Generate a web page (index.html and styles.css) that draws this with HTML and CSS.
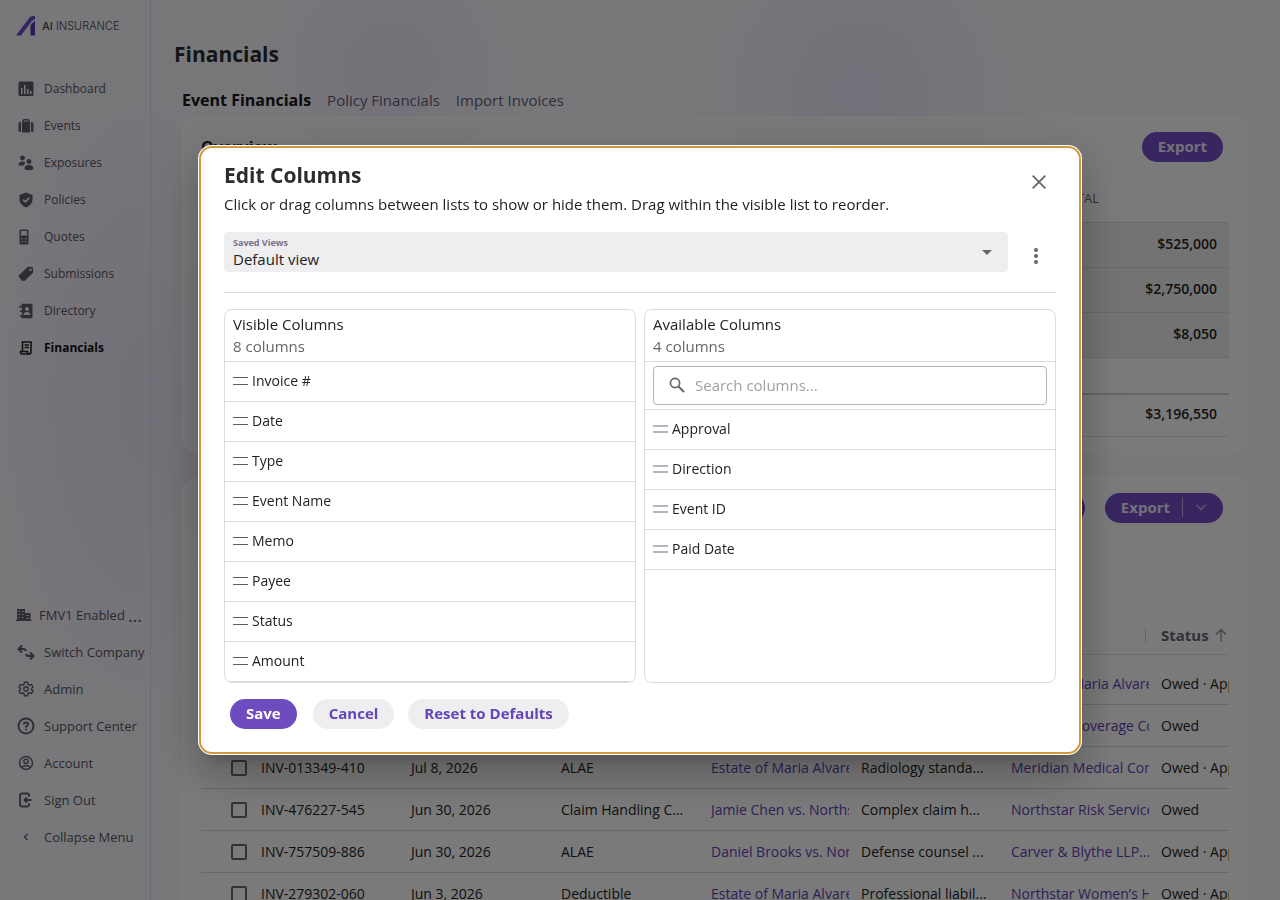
FILE: index.html
```html
<!DOCTYPE html>
<html lang="en">
<head>
<meta charset="utf-8">
<title>Financials</title>
<link rel="stylesheet" href="styles.css">
</head>
<body>
<div class="app">
  <aside class="sidebar">
    <a class="logo" href="#">
      <svg width="20" height="20" viewBox="0 0 20 20"><path d="M0 19.500 13.500 1.500Q15 0 16.500 0H19V3.500Q17 3.500 15.500 5.500L5 19.500Z" fill="#6d4bbd"/><path d="M14.500 9 19 4.500V19.500H14.500Z" fill="#5a34b4"/></svg>
      <span class="logo-text"><b>AI</b> INSURANCE</span>
    </a>
    <nav class="nav">
      <a href="#"><svg viewBox="0 0 16 16"><path fill-rule="evenodd" d="M2 0.500H14Q15.500 .5 15.500 2V13.500Q15.500 15 14 15H2Q.5 15 .5 13.500V2Q.5 .5 2 .5ZM3 7V13H4.500V7ZM6 4V13H7.500V4ZM9 8V13H10.500V8ZM12 10V13H13.500V10Z"/></svg>Dashboard</a>
      <a href="#"><svg viewBox="0 0 16 16"><path fill-rule="evenodd" d="M4.500 3.500V2.500Q4.500 1 6 1H10Q11.500 1 11.500 2.500V3.500H12V14.500H4V3.500ZM6 3.500H10V2.500H6ZM2 4H3V14H2Q.5 14 .5 12.500V5.500Q.5 4 2 4ZM13 4H14Q15.500 4 15.500 5.500V12.500Q15.500 14 14 14H13Z"/></svg>Events</a>
      <a href="#"><svg viewBox="0 0 16 16"><circle cx="4.500" cy="3" r="2.400"/><circle cx="11" cy="6.500" r="2.400"/><path d="M.5 10.500Q.5 6.500 4.500 6.500 7 6.500 7.500 8 6 9 5.500 10.500ZM6.500 14Q6.500 10 11 10T15.500 14Q11 16.500 6.500 14Z"/></svg>Exposures</a>
      <a href="#"><svg viewBox="0 0 16 16"><path fill-rule="evenodd" d="M8 .5 14.500 3V7.500Q14.500 13 8 15.500 1.500 13 1.500 7.500V3ZM7.300 11 11.800 6.500 10.500 5.300 7.300 8.500 5.700 7 4.500 8.200Z"/></svg>Policies</a>
      <a href="#"><svg viewBox="0 0 16 16"><path fill-rule="evenodd" d="M3 .5H9Q10.500 .5 10.500 2V14Q10.500 15.500 9 15.500H3Q1.500 15.500 1.500 14V2Q1.500 .5 3 .5ZM3 2V6.500H9V2ZM3.500 9V10.200H5V9ZM7 9V10.200H8.500V9ZM3.500 12V13.200H5V12ZM7 12V13.200H8.500V12Z"/></svg>Quotes</a>
      <a href="#"><svg viewBox="0 0 16 16"><path fill-rule="evenodd" d="M9 1.500Q9.700 .8 10.500 .8L14 1Q15 1 15 2L15.200 5.500Q15.200 6.500 14.500 7.200L7 14.500Q5.500 15.500 4 14.500L1.200 11.500Q0 10 1.500 8.700ZM12.500 2.500A1.200 1.200 0 1 0 12.510 4.900 1.200 1.200 0 1 0 12.500 2.500Z"/></svg>Submissions</a>
      <a href="#"><svg viewBox="0 0 16 16"><path fill-rule="evenodd" d="M5 .8H13Q14.500 .8 14.500 2.300V13.700Q14.500 15.200 13 15.200H3.500V13.500H2V12H4V9H2V7.500H4V4.500H1V3H3.500V.8ZM9 4A2 2 0 1 0 9.010 8 2 2 0 1 0 9 4ZM5.500 12H12.500Q12.500 9 9 9T5.500 12Z"/></svg>Directory</a>
      <a href="#" class="active"><svg viewBox="0 0 16 16" class="line"><path d="M4.500 11V2H13V12.500Q13 14 11.500 14H4Q2.500 14 2.500 11.500H9.500Q9.500 14 11.500 14M6.500 5H11M6.500 7.500H11"/></svg>Financials</a>
    </nav>
    <nav class="nav nav-bottom">
      <a href="#" class="company"><svg viewBox="0 0 16 16"><path fill-rule="evenodd" d="M1 2H9V6H14.500V13H15.500V14H0V13H1ZM2.500 4V5H4V4ZM6 4V5H7.500V4ZM2.500 7V8H4V7ZM6 7V8H7.500V7ZM2.500 10V11H4V10ZM6 10V11H7.500V10ZM10.500 8V9H12.500V8ZM10.500 11V12H12.500V11Z"/></svg>FMV1 Enabled <span class="dots">...</span></a>
      <a href="#"><svg viewBox="0 0 16 16" class="line wide"><path d="M4 1.500 .5 5 4 8.500M.5 5H5.500Q7.500 5 8 7M12 8.500 15.500 12 12 15.500M15.500 12H10.500Q8.500 12 8 10"/></svg>Switch Company</a>
      <a href="#"><svg viewBox="0 0 16 16" class="line"><path d="M6.500 1.300H9.500L10 3.300 11.500 4.200 13.500 3.500 15 6 13.500 7.500V8.500L15 10 13.500 12.500 11.500 11.800 10 12.700 9.500 14.700H6.500L6 12.700 4.500 11.800 2.500 12.500 1 10 2.500 8.500V7.500L1 6 2.500 3.500 4.500 4.200 6 3.300Z"/><circle cx="8" cy="8" r="2.200"/></svg>Admin</a>
      <a href="#"><svg viewBox="0 0 16 16" class="line wide"><circle cx="8" cy="8" r="7.500"/><path d="M5.800 6.500Q5.800 4.500 8 4.500T10.200 6.500Q10.200 7.500 8 8.500V9.500M8 10.800V12.200"/></svg>Support Center</a>
      <a href="#"><svg viewBox="0 0 16 16" class="line"><circle cx="8" cy="8" r="6.500"/><circle cx="8" cy="6.300" r="2.200"/><path d="M3.500 12.500Q8 8.500 12.500 12.500"/></svg>Account</a>
      <a href="#"><svg viewBox="0 0 16 16" class="line wide"><path d="M11 4.500V3Q11 1.500 9.500 1.500H4Q2 1.500 2 3.500V12.500Q2 14.500 4 14.500H9.500Q11 14.500 11 13V11.500M13.500 8H6.500M9 5.500 6.500 8 9 10.500"/></svg>Sign Out</a>
      <a href="#"><svg viewBox="0 0 16 16" class="line"><path d="M9.500 5 6.500 8 9.500 11"/></svg>Collapse Menu</a>
    </nav>
  </aside>

  <main class="main">
    <h1>Financials</h1>
    <nav class="tabs">
      <a href="#" class="current">Event Financials</a>
      <a href="#">Policy Financials</a>
      <a href="#">Import Invoices</a>
    </nav>

    <section class="card overview">
      <header class="card-head">
        <h2>Overview</h2>
        <button class="btn primary" type="button">Export</button>
      </header>
      <table class="totals">
        <thead><tr><th>TOTAL</th><th></th></tr></thead>
        <tbody>
          <tr><td></td><td>$525,000</td></tr>
          <tr><td></td><td>$2,750,000</td></tr>
          <tr><td></td><td>$8,050</td></tr>
        </tbody>
        <tfoot>
          <tr class="spacer"><td></td><td></td></tr>
          <tr><td></td><td>$3,196,550</td></tr>
        </tfoot>
      </table>
    </section>

    <section class="card">
      <header class="card-head actions">
        <button class="btn primary" type="button">Filter</button>
        <button class="btn primary split" type="button">Export<i></i><svg width="12" height="12" viewBox="0 0 12 12"><path d="M1.500 4 6 8.500 10.500 4"/></svg></button>
      </header>
      <div class="table-wrap">
        <table class="invoices">
          <colgroup><col class="c-check"><col><col><col><col><col><col><col></colgroup>
          <thead><tr><th></th><th></th><th></th><th></th><th></th><th></th><th></th><th class="status-head">Status <svg width="12" height="14" viewBox="0 0 12 14"><path d="M6 13.500V1.500M1 6.500 6 1.500 11 6.500"/></svg></th></tr></thead>
          <tbody>
            <tr><td><input type="checkbox" aria-label="Select row"></td><td></td><td></td><td></td><td></td><td></td><td><a href="#">Estate of Maria Alvarez</a></td><td>Owed · Approved</td></tr>
            <tr><td><input type="checkbox" aria-label="Select row"></td><td></td><td></td><td></td><td></td><td></td><td><a href="#">Meridian Coverage Counsel</a></td><td>Owed</td></tr>
            <tr><td><input type="checkbox" aria-label="Select INV-013349-410"></td><td>INV-013349-410</td><td>Jul 8, 2026</td><td>ALAE</td><td><a href="#">Estate of Maria Alvarez</a></td><td>Radiology standa...</td><td><a href="#">Meridian Medical Consultants</a></td><td>Owed · Approved</td></tr>
            <tr><td><input type="checkbox" aria-label="Select INV-476227-545"></td><td>INV-476227-545</td><td>Jun 30, 2026</td><td>Claim Handling C...</td><td><a href="#">Jamie Chen vs. Northstar</a></td><td>Complex claim h...</td><td><a href="#">Northstar Risk Services</a></td><td>Owed</td></tr>
            <tr><td><input type="checkbox" aria-label="Select INV-757509-886"></td><td>INV-757509-886</td><td>Jun 30, 2026</td><td>ALAE</td><td><a href="#">Daniel Brooks vs. Northstar</a></td><td>Defense counsel ...</td><td><a href="#">Carver &amp; Blythe LLP...</a></td><td>Owed · Approved</td></tr>
            <tr><td><input type="checkbox" aria-label="Select INV-279302-060"></td><td>INV-279302-060</td><td>Jun 3, 2026</td><td>Deductible</td><td><a href="#">Estate of Maria Alvarez</a></td><td>Professional liabil...</td><td><a href="#">Northstar Women’s Health</a></td><td>Owed · Approved</td></tr>
          </tbody>
        </table>
      </div>
    </section>
  </main>
</div>

<div class="backdrop">
  <div class="modal" role="dialog" aria-modal="true" aria-labelledby="dlg-title">
    <header class="modal-head">
      <div>
        <h2 id="dlg-title">Edit Columns</h2>
        <p>Click or drag columns between lists to show or hide them. Drag within the visible list to reorder.</p>
      </div>
      <button class="icon-btn" type="button" aria-label="Close"><svg width="14" height="14" viewBox="0 0 14 14"><path d="M.7 .7 13.300 13.300M13.300 .7 .7 13.300" fill="none" stroke="#666" stroke-width="1.800"/></svg></button>
    </header>
    <div class="view-row">
      <div class="view-select">
        <label for="view">Saved Views</label>
        <select id="view"><option>Default view</option></select>
        <svg class="caret" width="10" height="5" viewBox="0 0 10 5"><path d="M0 0H10L5 5Z" fill="#666"/></svg>
      </div>
      <button class="icon-btn" type="button" aria-label="View options"><svg width="4" height="16" viewBox="0 0 4 16" fill="#666"><circle cx="2" cy="2" r="2"/><circle cx="2" cy="8" r="2"/><circle cx="2" cy="14" r="2"/></svg></button>
    </div>
    <div class="lists">
      <section class="list">
        <header><h3>Visible Columns</h3><p>8 columns</p></header>
        <ul>
          <li><i class="grip"></i>Invoice #</li>
          <li><i class="grip"></i>Date</li>
          <li><i class="grip"></i>Type</li>
          <li><i class="grip"></i>Event Name</li>
          <li><i class="grip"></i>Memo</li>
          <li><i class="grip"></i>Payee</li>
          <li><i class="grip"></i>Status</li>
          <li><i class="grip"></i>Amount</li>
        </ul>
      </section>
      <section class="list available">
        <header><h3>Available Columns</h3><p>4 columns</p></header>
        <div class="search">
          <label class="search-box"><svg width="16" height="16" viewBox="0 0 16 16" fill="none" stroke="#666"><circle cx="6" cy="6" r="4.600" stroke-width="1.700"/><path d="M9.500 9.500 15 15" stroke-width="2"/></svg><input type="text" placeholder="Search columns..." aria-label="Search columns"></label>
        </div>
        <ul>
          <li><i class="grip"></i>Approval</li>
          <li><i class="grip"></i>Direction</li>
          <li><i class="grip"></i>Event ID</li>
          <li><i class="grip"></i>Paid Date</li>
        </ul>
      </section>
    </div>
    <footer class="modal-foot">
      <button class="btn primary" type="button">Save</button>
      <button class="btn soft cancel" type="button">Cancel</button>
      <button class="btn soft" type="button">Reset to Defaults</button>
    </footer>
  </div>
</div>
</body>
</html>
```
FILE: styles.css
```css
* { box-sizing: border-box; }
body, h1, h2, h3, p, ul { margin: 0; padding: 0; }
body {
  height: 100vh;
  overflow: hidden;
  font: 14px/20px "Open Sans", sans-serif;
  color: #222;
  background:
    radial-gradient(circle at 390px 70px, rgba(205, 185, 235, .24), transparent 140px),
    radial-gradient(circle at 860px 90px, rgba(200, 180, 235, .24), transparent 170px),
    radial-gradient(ellipse 190px 380px at 150px 400px, rgba(215, 195, 232, .4), transparent),
    #f0f0f4;
}
a { color: inherit; text-decoration: none; }
button, input, select { font: inherit; color: inherit; }
button { cursor: pointer; }

.app { display: flex; height: 100vh; }

/* Sidebar */
.sidebar {
  display: flex;
  flex-direction: column;
  flex: 0 0 151px;
  padding: 16px 0 45px;
  border-right: 1px solid #d6d3de;
}
.logo { display: flex; align-items: center; gap: 6px; padding-left: 16px; height: 20px; color: #45424f; }
.logo-text { font: 300 11px/20px Inter, sans-serif; }
.logo-text b { font-weight: 500; }
.nav { display: flex; flex-direction: column; margin-top: 34px; }
.nav a {
  display: flex;
  align-items: center;
  gap: 10px;
  height: 37px;
  padding-left: 18px;
  font-size: 12px;
  color: #55535e;
  white-space: nowrap;
}
.nav svg { width: 16px; height: 16px; fill: #5d596b; flex: none; }
.nav .line { fill: none; stroke: #5d596b; stroke-width: 1.4; }
.nav .wide { stroke-width: 1.9; overflow: visible; }
.nav .active { font-weight: 700; color: #111; }
.nav .active svg { stroke: #222; stroke-width: 1.6; }
.nav .company { padding-left: 16px; gap: 7px; }
.nav-bottom { margin-top: auto; }
.nav-bottom a { font-size: 13px; }
.dots { font-size: 18px; margin-left: -4px; }

/* Main */
.main { flex: 1; min-width: 0; padding: 38px 32px 0 23px; }
h1 { font-size: 21px; line-height: 32px; color: #2a2a2e; }
.tabs { display: flex; gap: 16px; margin: 18px 0 4px 8px; font-size: 15px; line-height: 24px; color: #615d70; }
.tabs .current { font-size: 16px; font-weight: 700; color: #151515; }
.card {
  margin-left: 8px;
  padding: 15px 18px;
  border: 1px solid #f8f8fa;
  border-radius: 16px;
  background: rgba(247, 247, 246, .65);
}
.overview { margin-bottom: 24px; }
.card-head { display: flex; justify-content: space-between; align-items: center; padding-right: 6px; height: 30px; }
.card-head h2 { font-size: 16px; }
.actions { justify-content: flex-end; gap: 20px; }

.btn {
  height: 30px;
  padding: 0 16px 2px;
  border: 0;
  border-radius: 15px;
  font-size: 15px;
  line-height: 20px;
  font-weight: 700;
}
.primary { background: #6e4cc0; color: #fff; }
.soft { background: #eeeef1; color: #6543b8; }
.card .primary { color: #e6e0f2; }
.split { display: flex; align-items: center; gap: 12px; }
.split i { width: 1px; height: 20px; background: #b9a8e0; }
.split svg { fill: none; stroke: #b9a8e0; stroke-width: 1.6; }

.totals { width: 100%; margin-top: 12px; border-collapse: collapse; table-layout: fixed; }
.totals th { height: 48px; padding: 0; font-weight: 400; font-size: 13px; color: #66636e; text-align: right; }
.totals th:first-child { width: 898px; }
.totals td { height: 45px; padding: 0 12px 2px; border-top: 1px solid #d2d2d2; font-weight: 600; text-align: right; }
.totals tbody { background: #e7e7e7; }
.totals .spacer td { height: 37px; }
.totals tfoot tr:last-child td { height: 42px; border-top: 2px solid #c8c8c8; border-bottom: 1px solid #d8d8d8; }

.table-wrap { overflow: hidden; margin-top: 93px; }
.invoices { width: 1100px; table-layout: fixed; border-collapse: separate; border-spacing: 0; }
.c-check { width: 50px; }
.invoices th { height: 39px; padding: 0 0 0 10px; border-bottom: 1px solid #d8d8d8; text-align: left; font-size: 15px; color: #656176; }
.status-head svg { fill: none; stroke: #8c889a; stroke-width: 1.3; vertical-align: -1px; margin-left: 2px; }
.invoices th:nth-child(7) { background: linear-gradient(#c8c8c8, #c8c8c8) 144px 12px / 1px 15px no-repeat; }
.invoices td { height: 42px; padding: 1px 2px 0 10px; border-bottom: 1px solid #d2d0d2; overflow: hidden; white-space: nowrap; }
.invoices tbody::before { content: ""; display: block; height: 8px; }
.invoices td a { color: #5d3fb0; display: block; overflow: hidden; }
.invoices td:first-child { padding: 2px 0 0 30px; }
.invoices input { display: block; appearance: none; width: 16px; height: 16px; margin: 0; border: 2px solid #66646c; border-radius: 2px; }

/* Dialog */
.backdrop {
  position: fixed;
  inset: 0;
  display: flex;
  align-items: center;
  justify-content: center;
  background: rgba(0, 0, 0, .5);
}
.modal {
  width: 880px;
  max-width: 94vw;
  padding: 13px 24px 24px;
  border-radius: 12px;
  background: #fff;
  outline: 2px solid #d39a3c;
  outline-offset: -1px;
  box-shadow: 0 0 0 2px #fff, 0 11px 15px -7px rgba(0, 0, 0, .2), 0 24px 38px 3px rgba(0, 0, 0, .14), 0 9px 46px 8px rgba(0, 0, 0, .12);
}
.modal-head { display: flex; justify-content: space-between; align-items: flex-start; }
.modal-head h2 { font-size: 21px; line-height: 30px; color: #2c2c2c; }
.modal-head p { margin-top: 2px; font-size: 15px; line-height: 24px; }
.icon-btn { display: grid; place-items: center; width: 40px; height: 40px; padding: 0; border: 0; background: none; }
.modal-head .icon-btn { width: 34px; height: 44px; }
.view-row { display: flex; gap: 8px; align-items: flex-end; margin-top: 16px; padding-bottom: 20px; border-bottom: 1px solid #dedede; }
.view-select { position: relative; flex: 1; height: 40px; padding: 5px 9px 0; border-radius: 4px; background: #eeeef1; }
.view-select label { display: block; font-size: 9px; line-height: 12px; font-weight: 700; color: #77738a; }
.view-select select { display: block; width: 100%; height: 20px; padding: 0; border: 0; appearance: none; background: none; font-size: 15px; line-height: 20px; }
.caret { position: absolute; right: 16px; top: 18px; }
.view-row .icon-btn { height: 32px; }

.lists { display: grid; grid-template-columns: 1fr 1fr; gap: 8px; margin-top: 16px; }
.list { border: 1px solid #dcdcdc; border-radius: 8px; overflow: hidden; }
.list header { height: 52px; padding: 3px 8px 0; border-bottom: 1px solid #dcdcdc; }
.list h3, .list p { font-size: 15px; line-height: 22px; font-weight: 400; }
.list p { color: #666; }
.list ul { list-style: none; }
.list li { display: flex; align-items: center; gap: 4px; height: 40px; padding: 0 8px 1px; border-bottom: 1px solid #dcdcdc; }
.grip { width: 15px; height: 8px; border: solid #5c5c66; border-width: 1px 0; }
.available .grip { border-color: #b5b5be; border-width: 2px 0; }
.search { height: 48px; padding: 4px 8px 0; border-bottom: 1px solid #dcdcdc; }
.search-box { display: flex; align-items: center; gap: 10px; height: 39px; padding: 0 15px 2px; border: 1px solid #b5b5b5; border-radius: 4px; }
.search-box input { flex: 1; border: 0; padding: 0; outline: 0; background: none; font-size: 15px; }
.search-box input::placeholder { color: #a0a0a0; opacity: 1; }
.modal-foot { display: flex; gap: 14px; margin-top: 16px; padding-left: 6px; }
.modal-foot .cancel { margin-left: 2px; }
```
